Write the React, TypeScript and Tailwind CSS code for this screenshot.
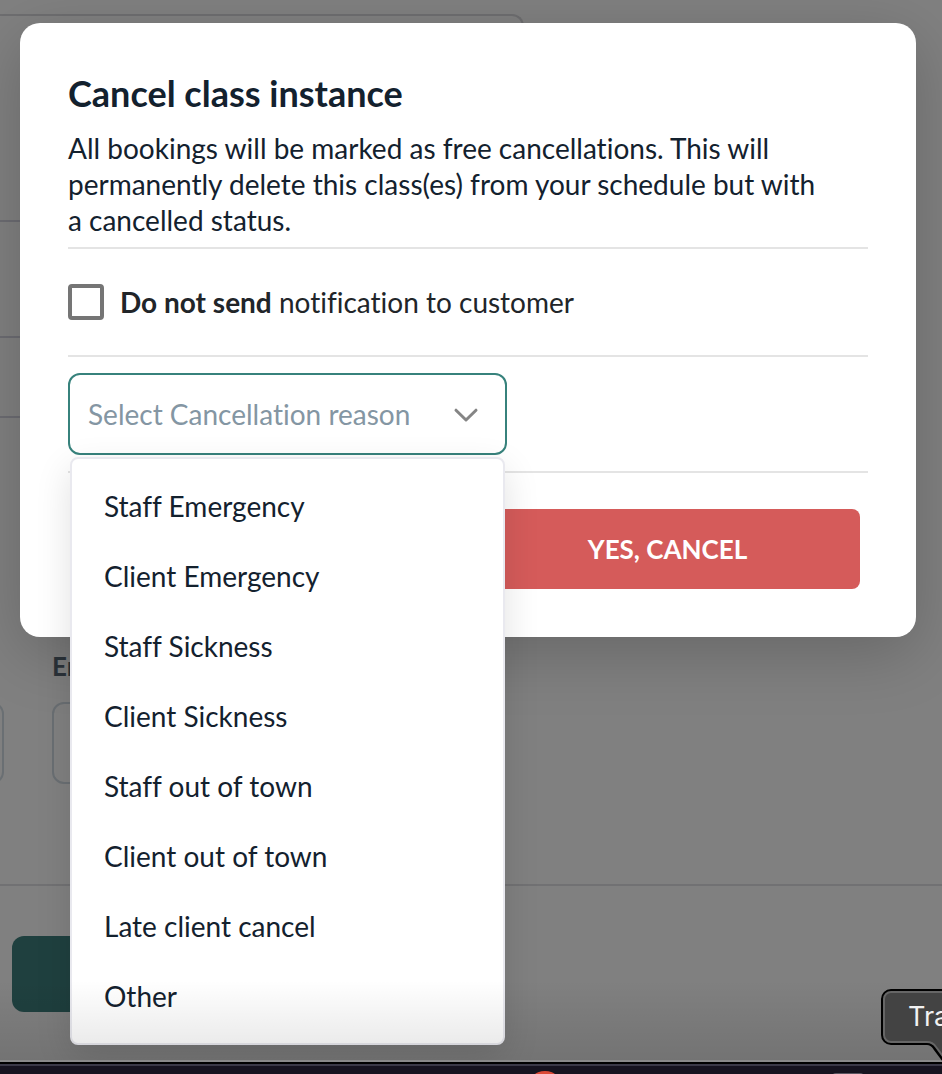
import { useState } from "react";

const REASONS = [
  "Staff Emergency",
  "Client Emergency",
  "Staff Sickness",
  "Client Sickness",
  "Staff out of town",
  "Client out of town",
  "Late client cancel",
  "Other",
];

function SchedulePage() {
  return (
    <main className="flex flex-1 flex-col pt-3.5">
      <section className="w-[524px] rounded-tr-xl border-t-2 border-r-2 border-[#6e6e70]">
        <div className="h-[206px] border-b-2 border-[#6c6c72]" />
        <div className="h-[116px] border-b-2 border-[#6c6c72]" />
        <div className="h-20 border-b-2 border-[#6c6c72]" />
        <div className="h-40" />
      </section>
      <div className="-ml-96 mt-[71px] flex gap-12 pl-1">
        <div className="w-96 pt-[53px]">
          <div className="h-[82px] rounded-xl border-2 border-[#6a6f73]" />
        </div>
        <div className="w-96">
          <div className="h-[53px] text-[26px] leading-[34px] font-bold text-[#2c343b]">En</div>
          <div className="h-[82px] rounded-xl border-2 border-[#6a6f73]" />
        </div>
      </div>
      <footer className="mt-[100px] border-t-2 border-[#717173] pt-[50px] pl-3">
        <div className="h-[76px] w-80 rounded-xl bg-[#1f403f]" />
      </footer>
    </main>
  );
}

function ReasonSelect() {
  const [open, setOpen] = useState(true);
  const [reason, setReason] = useState("");

  return (
    <div className="relative w-[439px]">
      <select
        aria-label="Select Cancellation reason"
        value={reason}
        onChange={(e) => setReason(e.target.value)}
        onMouseDown={(e) => {
          e.preventDefault();
          setOpen(!open);
        }}
        className="block h-[82px] w-full appearance-none rounded-xl border-2 border-[#37827c] bg-white pr-20 pl-[18px] text-[28px] text-[#8496a3] outline-none [font-variant-ligatures:none]"
      >
        <option value="">Select Cancellation reason</option>
        {REASONS.map((r) => (
          <option key={r}>{r}</option>
        ))}
      </select>
      <svg
        viewBox="0 0 26 16"
        className="pointer-events-none absolute top-[34px] right-7 h-4 w-[26px]"
        fill="none"
        stroke="#858585"
        strokeWidth="3"
        strokeLinecap="round"
        strokeLinejoin="round"
      >
        <path d="M3 3.2 13 13 23 3.2" />
      </svg>
      {open && (
        <ul className="absolute top-[84px] right-0.5 left-0.5 z-10 rounded-lg border-2 border-[#e9e9ef] bg-white py-3 shadow-[0_12px_36px_rgba(0,0,0,0.12)]">
          {REASONS.map((r) => (
            <li key={r}>
              <button
                type="button"
                onClick={() => {
                  setReason(r);
                  setOpen(false);
                }}
                className="block h-[70px] w-full px-8 text-left text-[28px]"
              >
                {r}
              </button>
            </li>
          ))}
        </ul>
      )}
    </div>
  );
}

function CancelDialog() {
  return (
    <div
      role="dialog"
      aria-labelledby="cancel-title"
      className="mt-[23px] mr-[26px] ml-5 rounded-[20px] bg-white p-12 text-[28px] shadow-[0_16px_64px_rgba(0,0,0,0.2)]"
    >
      <h1 id="cancel-title" className="text-[36px] leading-[44px] font-bold">
        Cancel class instance
      </h1>
      <p className="mt-[15px] pr-12 leading-9">
        All bookings will be marked as free cancellations. This will permanently delete this
        class(es) from your schedule but with a cancelled status.
      </p>
      <hr className="mt-[9px] border-t-2 border-[#e4e4e4]" />
      <label className="flex items-center gap-4 py-[35px] leading-9 text-[#212529]">
        <input
          type="checkbox"
          className="size-9 appearance-none rounded-sm border-4 border-[#757575] bg-white checked:bg-[#37827c]"
        />
        <span>
          <strong className="font-bold">Do not send</strong> notification to customer
        </span>
      </label>
      <hr className="border-t-2 border-[#e4e4e4]" />
      <div className="py-4">
        <ReasonSelect />
      </div>
      <hr className="border-t-2 border-[#e4e4e4]" />
      <div className="mt-9 grid grid-cols-2 gap-3.5 px-2">
        <button
          type="button"
          className="col-start-2 h-20 rounded-lg bg-[#d55b5a] text-[26px] font-bold text-white"
        >
          YES, CANCEL
        </button>
      </div>
    </div>
  );
}

function Dock() {
  return (
    <div className="relative z-20 h-3.5 overflow-hidden border-t-2 border-[#8a8a8a] bg-[#171420]">
      <div className="h-1 border-t-2 border-b-2 border-t-black border-b-[#3b3947]" />
      <div className="absolute top-[9px] left-[527px] size-9 rounded-full bg-[#dc4937]" />
      <div className="absolute top-[11px] left-[832px] h-4 w-8 rounded-sm bg-[#5a5661]" />
    </div>
  );
}

function DockTooltip() {
  return (
    <div className="absolute right-0 bottom-3 z-30 h-[74px] w-[62px] overflow-hidden">
      <svg viewBox="0 0 62 74" className="absolute inset-0 size-full">
        <path
          d="M90 3H11a8 8 0 0 0-8 8v36a8 8 0 0 0 8 8H47C51 55 53 57 55 60L64 72H90Z"
          fill="#434343"
          stroke="#000"
          strokeWidth="4"
        />
        <path
          d="M90 4H11a7 7 0 0 0-7 7v36a7 7 0 0 0 7 7H47C52 54 54 56 56 59L65 71H90Z"
          fill="#434343"
          stroke="#666"
          strokeWidth="2"
        />
      </svg>
      <span className="relative block pt-[11px] pl-7 font-['Inter',sans-serif] text-[27px] leading-9 text-[#f2f2f2]">
        Tra
      </span>
    </div>
  );
}

export default function App() {
  return (
    <div className="relative flex min-h-screen flex-col overflow-hidden bg-[#808080] font-['Lato',sans-serif] text-[#13212e] [font-variant-ligatures:none]">
      <SchedulePage />
      <div className="absolute inset-0 z-10">
        <CancelDialog />
      </div>
      <div className="pointer-events-none absolute inset-x-0 bottom-3.5 z-10 h-20 bg-linear-to-t from-black/10 to-transparent" />
      <DockTooltip />
      <Dock />
    </div>
  );
}
